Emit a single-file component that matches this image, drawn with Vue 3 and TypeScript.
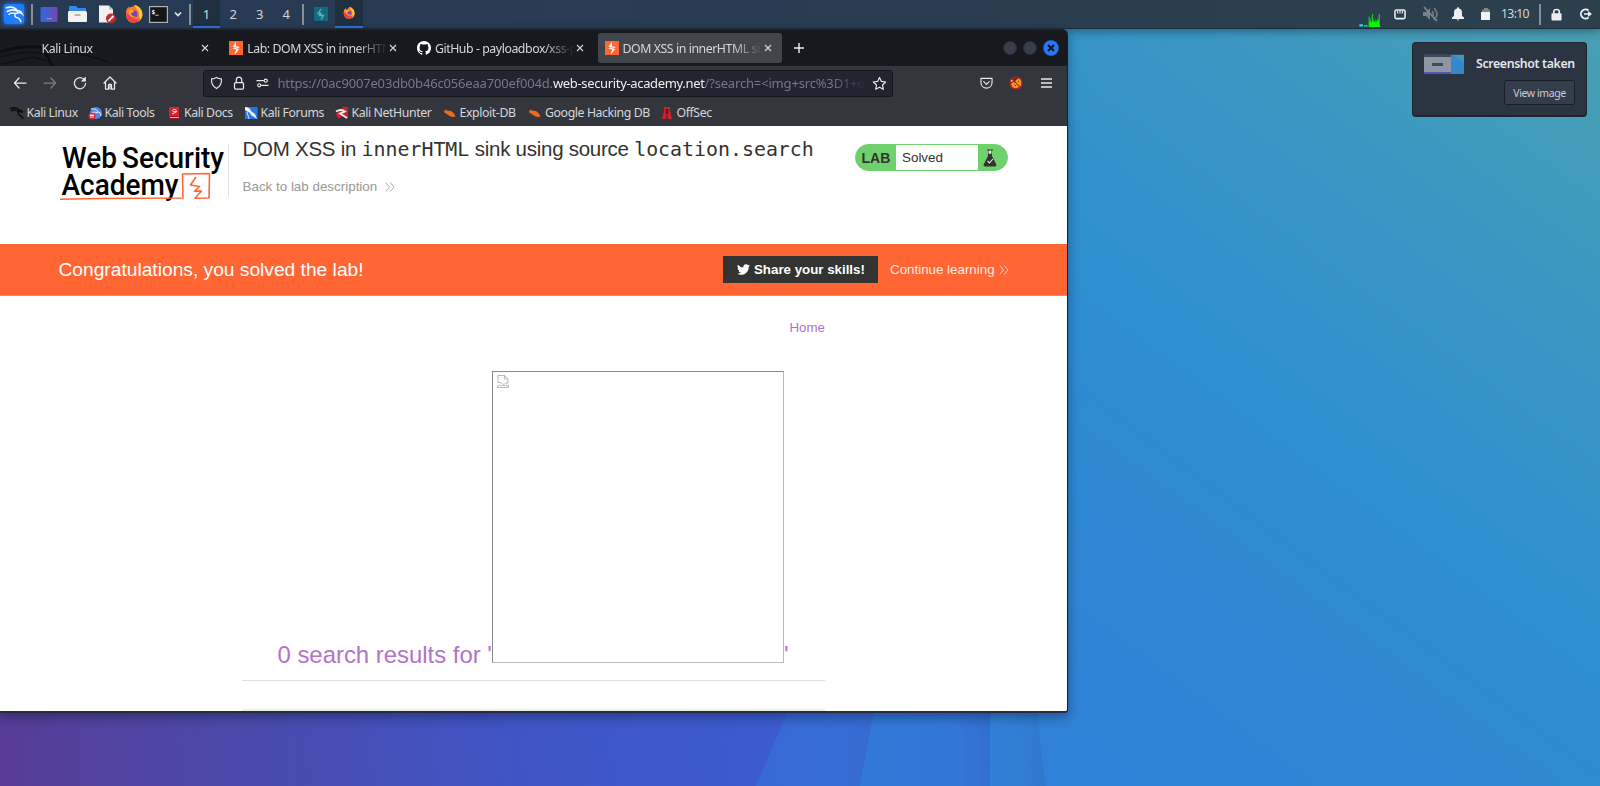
<script setup lang="ts">
interface Tab { title: string; icon: 'none' | 'burp' | 'github'; active?: boolean }
interface Bookmark { label: string; icon: string }

const tabs: Tab[] = [
  { title: 'Kali Linux', icon: 'none' },
  { title: 'Lab: DOM XSS in innerHTML', icon: 'burp' },
  { title: 'GitHub - payloadbox/xss-payload', icon: 'github' },
  { title: 'DOM XSS in innerHTML sink', icon: 'burp', active: true },
]
const bookmarks: Bookmark[] = [
  { label: 'Kali Linux', icon: 'dragon' },
  { label: 'Kali Tools', icon: 'tools' },
  { label: 'Kali Docs', icon: 'docs' },
  { label: 'Kali Forums', icon: 'forums' },
  { label: 'Kali NetHunter', icon: 'hunter' },
  { label: 'Exploit-DB', icon: 'bug' },
  { label: 'Google Hacking DB', icon: 'bug' },
  { label: 'OffSec', icon: 'offsec' },
]
const workspaces = [1, 2, 3, 4]
</script>

<template>
  <div class="desktop">
    <svg class="wallpaper" viewBox="0 0 1600 786" preserveAspectRatio="none">
      <defs>
        <linearGradient id="base" gradientUnits="userSpaceOnUse" x1="1060" y1="800" x2="1610" y2="60">
          <stop offset="0" stop-color="#2f80d8" /><stop offset=".22" stop-color="#2f87d4" /><stop offset=".48" stop-color="#2f8fd0" /><stop offset=".75" stop-color="#3a97c3" /><stop offset="1" stop-color="#489fb3" />
        </linearGradient>
        <linearGradient id="violet" gradientUnits="userSpaceOnUse" x1="0" y1="780" x2="790" y2="690">
          <stop offset="0" stop-color="#573c96" /><stop offset=".3" stop-color="#4b4aab" /><stop offset=".65" stop-color="#4055c5" /><stop offset="1" stop-color="#3b5cd0" />
        </linearGradient>
        <linearGradient id="fold" gradientUnits="userSpaceOnUse" x1="870" y1="0" x2="990" y2="0"><stop offset="0" stop-color="#3179d8" /><stop offset=".75" stop-color="#3276d6" /><stop offset="1" stop-color="#326ece" /></linearGradient>
        <linearGradient id="fold2" gradientUnits="userSpaceOnUse" x1="990" y1="0" x2="1046" y2="0"><stop offset="0" stop-color="#2f80d6" /><stop offset=".5" stop-color="#307fd4" /><stop offset="1" stop-color="#2f77cb" /></linearGradient>
        <linearGradient id="fold3" gradientUnits="userSpaceOnUse" x1="770" y1="0" x2="875" y2="0"><stop offset="0" stop-color="#386ad6" /><stop offset=".7" stop-color="#366cd5" /><stop offset="1" stop-color="#3669cf" /></linearGradient>
      </defs>
      <rect width="1600" height="786" fill="url(#base)" />
      <path d="M0 690H1037Q1038 740 1046 786H0z" fill="url(#fold2)" />
      <path d="M0 690H990V786H0z" fill="url(#fold)" />
      <path d="M0 690H878L860 786H0z" fill="url(#fold3)" />
      <path d="M0 690H797L756 786H0z" fill="url(#violet)" />
    </svg>

    <header class="panel">
      <div class="launchers">
        <svg class="kali" viewBox="0 0 24 24"><rect x="1" y="1" width="22" height="22" rx="3" fill="#1f7cff" /><path d="M3 5.500Q11 2.500 16 8.500M4 9.500Q11 5.500 16.500 9.500M16 8.500q3.500-.5 5 3.500-2.500-2-5.500-1-4.500 1.500-1.500 4.500 5 1 5.500 5.500M14 11.500Q8 10 6 13" stroke="#eef6ff" stroke-width="1.700" fill="none" /></svg>
        <i class="sep s1"></i>
        <svg class="l-desk" viewBox="0 0 18 16"><defs><linearGradient id="dk"><stop stop-color="#2b6be0" /><stop offset="1" stop-color="#7a45b0" /></linearGradient></defs><rect width="18" height="16" rx="1" fill="url(#dk)" /><path d="M7 12.500h5" stroke="#c2c9ee" stroke-dasharray="1.300 .5" /></svg>
        <svg class="l-folder" viewBox="0 0 19 18"><path d="M1 2Q1 1 2 1h6l2 2h7q1 0 1 1v5H1z" fill="#3586ef" /><path d="M2 6h15.500q1.500 0 1.500 1.500V16q0 1-1 1H1q-1 0-1-1V7q0-1 1-1z" fill="#f4f2f1" /><path d="M6.500 10h6" stroke="#aaa6a4" stroke-width="1.600" /></svg>
        <svg class="l-doc" viewBox="0 0 18 19"><path d="M1 .5h10l4 4v13H1z" fill="#f4f2f0" /><path d="m11 .5 4 4h-4z" fill="#bcbcbc" /><circle cx="13" cy="13.500" r="5" fill="#c9252f" /><path d="m10.500 16 5-5" stroke="#fff" stroke-width="1.800" /></svg>
        <svg class="l-fox" viewBox="0 0 18 18"><circle cx="9" cy="9.500" r="8" fill="#ff8a1f" /><path d="M1 8C1 4 3 3 4 1.500L5 4c3-1 4-3 4-4 4 1 8 5 8 10-1 6-6 8-10 7.500C3 17 1 13 1 8z" fill="#ff7823" /><path d="M10 0c4 1 8 5 7.500 10-.5 4-3 6.500-6 7 3-3 4-8 1-12C11 3 10 2 10 0z" fill="#ffc630" /><path d="M1 8c0 6 4 9.500 8 9.500s6-3 6-5c-2 3-8 2-9-2z" fill="#f43d4f" /><circle cx="9" cy="9" r="3.600" fill="#7542c8" /><path d="M4 5c3-1 5 1 5 2l-3 1c0 3 3 4 5 3-3 3-7 0-7-3z" fill="#ffa928" /></svg>
        <svg class="l-term" viewBox="0 0 19 17"><rect x=".6" y=".6" width="17.800" height="15.800" fill="#151617" stroke="#adb2b5" stroke-width="1.200" /><text x="2.500" y="7.500" class="prompt">$_</text></svg>
        <svg class="l-chev" viewBox="0 0 8 6"><path d="m1 1.500 3 3 3-3" fill="none" stroke="#e5e9eb" stroke-width="1.700" /></svg>
        <i class="sep s2"></i>
      </div>
      <nav class="spaces">
        <span v-for="n in workspaces" :key="n" :class="{ on: n === 1 }">{{ n }}</span>
      </nav>
      <i class="sep s3"></i>
      <svg class="task-burp" viewBox="0 0 14 14"><rect width="14" height="14" fill="#136b7e" /><path d="m7 2-3 4.500h3L5.500 8.500h4L7 12.500" fill="none" stroke="#5db4c0" stroke-width="1.300" /></svg>
      <div class="task-on">
        <svg viewBox="0 0 18 18"><path d="M1 8C1 4 3 3 4 1.500L5 4c3-1 4-3 4-4 4 1 8 5 8 10-1 6-6 8-10 7.500C3 17 1 13 1 8z" fill="#ff8424" /><path d="M10 0c4 1 8 5 7.500 10-.5 4-3 6.500-6 7 3-3 4-8 1-12z" fill="#ffc630" /><path d="M1 8c0 6 4 9.500 8 9.500s6-3 6-5c-2 3-8 2-9-2z" fill="#f4394c" /><circle cx="9.500" cy="9" r="3.500" fill="#8049bb" /><path d="M4 5c3-1 5 1 5 2l-3 1c0 3 3 4 5 3-3 3-7 0-7-3z" fill="#ffa928" /></svg>
      </div>
      <div class="tray">
        <svg class="t-cpu" viewBox="0 0 25 15"><path d="M0 12h4v2.500H0zM5 13h4v1.500H5z" fill="#12e2e0" /><path d="M10 15V4h1v7l1-6v5l.8-8v8l1-1V1h1v9l1-4v4l1-2v3l1-6v5l1-3v4l1-8v6l1-3V1h1v12h.500v2z" fill="#0cf50c" /></svg>
        <svg class="t-net" viewBox="0 0 13 12"><rect x="1" y="1" width="11" height="9.500" rx="1.500" fill="none" stroke="#eceff0" stroke-width="1.700" /><path d="M4 2v3M6.500 2v3M9 2v3" stroke="#eceff0" stroke-width="1.200" /></svg>
        <svg class="t-vol" viewBox="0 0 17 16"><path d="M1 6h3l4-4v12l-4-4H1z" fill="#73818a" /><path d="M10 5q2.500 3 0 6M12 2q6 6 0 12" fill="none" stroke="#73818a" stroke-width="1.500" /><path d="m2 1 13 14" stroke="#7e8990" stroke-width="1.700" /></svg>
        <svg class="t-bell" viewBox="0 0 12 14"><path d="M6 0q1 0 1 1.500 3 .5 3 4V9l2 1.500V12H0v-1.500L2 9V5.500q0-3.500 3-4Q5 0 6 0zM4.500 12.500h3q-1.500 2-3 0z" fill="#eceff0" /></svg>
        <svg class="t-bat" viewBox="0 0 10 12"><path d="M3 0h4v1.500h2v3H1v-3h2z" fill="#7b868d" /><path d="M0 4h9v8H0z" fill="#f0f2f2" /></svg>
        <span class="clock">13:10</span>
        <i class="sep s4"></i>
        <svg class="t-lock" viewBox="0 0 12 13"><path d="M3 6V3.500q0-2.500 3-2.500t3 2.500V6" fill="none" stroke="#eceff0" stroke-width="1.800" /><rect x=".5" y="5" width="11" height="8" rx="1" fill="#eceff0" /></svg>
        <svg class="t-out" viewBox="0 0 13 12"><path d="M9.500 2.500A4.600 4.600 0 1 0 9.500 9.500" fill="none" stroke="#eceff0" stroke-width="1.900" /><path d="M5 5.200h4V3l4 3-4 3V6.800H5z" fill="#eceff0" /></svg>
      </div>
    </header>

    <main class="window">
      <div class="tabstrip">
        <svg class="theme" viewBox="0 0 115 22"><path d="M0 8Q22 1 41 3l7 10 4 9" fill="none" stroke="#0a0b0e" stroke-width="3" /><path d="M0 13q20-6 42-4M14 17l20-4 12 4M0 20l18-3M58 9q20-2 50 9" fill="none" stroke="#0d0e12" stroke-width="1.500" /></svg>
        <div v-for="t in tabs" :key="t.title" class="tab" :class="{ active: t.active }">
          <svg v-if="t.icon === 'burp'" class="fav" viewBox="0 0 14 14"><rect width="14" height="14" fill="#ff6633" /><path d="M6.800.8 3.500 6h2.300L3.300 7.400l4 1-1.500 3.900L6 13.200l4.300-5.500H8.500l2.200-1.600-3.700-.8z" fill="#fff" /><path d="m3.500 5.800 6.700 2" stroke="#ff6633" stroke-width=".6" /></svg>
          <svg v-else-if="t.icon === 'github'" class="fav" viewBox="0 0 16 16"><path fill="#fff" d="M8 0C3.580 0 0 3.580 0 8c0 3.540 2.290 6.530 5.470 7.590.4.070.55-.17.55-.38 0-.19-.01-.82-.01-1.490-2.010.37-2.530-.49-2.690-.94-.09-.23-.48-.94-.82-1.130-.28-.15-.68-.52-.01-.53.63-.01 1.080.58 1.230.82.72 1.210 1.870.87 2.330.66.070-.52.280-.87.510-1.070-1.780-.2-3.640-.89-3.640-3.950 0-.87.310-1.590.820-2.150-.080-.2-.360-1.020.080-2.120 0 0 .67-.21 2.200.82.640-.18 1.320-.27 2-.27s1.360.09 2 .27c1.530-1.040 2.200-.82 2.200-.82.440 1.100.160 1.920.080 2.120.510.560.820 1.270.820 2.150 0 3.070-1.870 3.750-3.650 3.950.290.250.540.730.540 1.480 0 1.070-.01 1.930-.01 2.200 0 .210.150.460.550.380A8 8 0 0 0 16 8c0-4.420-3.580-8-8-8" /></svg>
          <span class="label">{{ t.title }}</span>
          <svg class="close" viewBox="0 0 8 8"><path d="m1 1 6 6m0-6L1 7" stroke="#d7d8db" stroke-width="1.100" /></svg>
        </div>
        <svg class="plus" viewBox="0 0 12 12"><path d="M6 1v10M1 6h10" stroke="#eeeef0" stroke-width="1.400" /></svg>
        <div class="controls"><i></i><i></i><svg viewBox="0 0 16 16"><circle cx="8" cy="8" r="7.700" fill="#2777f5" /><path d="m5 5 6 6m0-6-6 6" stroke="#11151f" stroke-width="2" /></svg></div>
      </div>

      <div class="toolbar">
        <svg class="n-back" viewBox="0 0 14 12"><path d="M6 1 1.500 6 6 11M2 6h11" class="ln" /></svg>
        <svg class="n-fwd" viewBox="0 0 14 12"><path d="m8 1 4.500 5L8 11m4-5H1" class="ln" /></svg>
        <svg class="n-reload" viewBox="0 0 14 14"><path d="M11.500 3.800A5.600 5.600 0 1 0 12.600 7.500" class="ln" /><path d="M12.800.5V5.500H7.800z" fill="#eeeef0" /></svg>
        <svg class="n-home" viewBox="0 0 14 14"><path d="M1 7 7 1l6 6M2.500 6v7h3V9q0-1 1.500-1t1.500 1v4h3V6M7 9v4" class="ln" /></svg>
        <div class="url">
          <svg class="u-shield" viewBox="0 0 14 14"><path d="M7 1q2 1.300 5.300 1.500Q13 9.500 7 13 1 9.500 1.700 2.500 5 2.300 7 1z" class="ln" /></svg>
          <svg class="u-lock" viewBox="0 0 12 14"><path d="M3.300 6.500V4Q3.300 1 6 1t2.700 3v2.500" class="ln" /><rect x="1.500" y="6.500" width="9" height="6.500" rx="1" class="ln" /></svg>
          <svg class="u-perm" viewBox="0 0 14 10"><path d="M1 2.500h7M6 7.500h7" class="ln" /><circle cx="10.500" cy="2.500" r="1.700" class="ln" /><circle cx="3.500" cy="7.500" r="1.700" class="ln" /></svg>
          <div class="address"><span class="host">https://0ac9007e03db0b46c056eaa700ef004d.</span><b>web-security-academy.net</b><span class="query">/?search=&lt;img+src%3D1+one</span></div>
          <svg class="u-star" viewBox="0 0 16 16"><path d="m8 1.500 2 4.300 4.600.6-3.400 3.200.9 4.600L8 12l-4.100 2.200.9-4.600L1.400 6.400 6 5.800z" class="ln" /></svg>
        </div>
        <svg class="n-pocket" viewBox="0 0 14 13"><path d="M1 1.500h12V6c0 8-12 8-12 0z" class="ln" /><path d="m4 5 3 3 3-3" class="ln" /></svg>
        <svg class="n-fox" viewBox="0 0 14 14"><circle cx="7" cy="7" r="6" fill="#5a2a22" /><path d="M2 8q1-2 4-2l1-2 3-2 2 1 .5 4-2 4-4 1.500-3-1z" fill="#f09a24" /><path d="M1.500 6 2 3l2.500 2zM11 9.500l1.500-2 .3 2.500z" fill="#f4ece6" /><path d="m5.500 9 1.500 1M9 5l1 1" stroke="#5c2408" /><circle cx="7" cy="7" r="6" fill="none" stroke="#d01c1c" stroke-width="1.200" /><path d="m3 3 8 8" stroke="#d01c1c" stroke-width="1.100" /></svg>
        <svg class="n-menu" viewBox="0 0 11 10"><path d="M0 1h11M0 5h11M0 9h11" stroke="#e9e9eb" stroke-width="1.400" /></svg>
      </div>

      <div class="bookmarks">
        <span v-for="b in bookmarks" :key="b.label" class="mark">
          <svg viewBox="0 0 14 14">
            <path v-if="b.icon === 'dragon'" d="M0 3c4-2 8-1 9 1M1 5c4-2 7 0 8 1M8 4c3 0 4 1 5 2-3-1-5 0-5 1 0 3 4 2 5 6" fill="none" stroke="#0c0d0f" stroke-width="1.600" />
            <g v-else-if="b.icon === 'tools'"><circle cx="8" cy="7" r="6" fill="#4b87ed" /><path d="M3 3q5-1 7 3 3 0 3 4M3 7q4-2 7 0" fill="none" stroke="#e5eeff" /><circle cx="4" cy="10" r="3.500" fill="#d9273c" /><path d="M2 9.500h4M3 8v4M5 8v4" stroke="#fff" stroke-width=".8" /></g>
            <g v-else-if="b.icon === 'docs'"><path d="M2 1h10v9H2z" fill="#df1f2d" /><path d="M2 10h10v3H2z" fill="#aa1722" /><path d="M3 11.500h9" stroke="#e4cdd0" stroke-width=".9" /><path d="M9.500 4q-4-1.500-4 .5t3.500 1-4 2.500" fill="none" stroke="#fff" stroke-width=".9" /></g>
            <g v-else-if="b.icon === 'forums'"><rect x="1" y="1" width="12.500" height="12" fill="#2377e8" /><path d="M1 1q5 0 6 4l4 3 2 5-6-4-1-2-5-3z" fill="#edf4ff" /><path d="m3 6 2 7" stroke="#d0e2ff" /></g>
            <g v-else-if="b.icon === 'hunter'"><path d="M1 8 8 1l5 0 0 12-4-4-6 4z" fill="#d3212c" /><path d="M1 5.500q5-3 9 0l-5 2 7 4.500" fill="none" stroke="#f5eceb" stroke-width="1.800" /></g>
            <path v-else-if="b.icon === 'bug'" d="M1 5 3 3.500l1 1 4 .5 3 2.500 1.500 3-2.500.5-3-.8L4 8.200 1.500 6.500z" fill="#ee6a18" />
            <g v-else><path d="M4 1h6v4l2 8H9l-2-2-2 2H2l2-8z" fill="#dd1c26" /><path d="M6 3h2v5H6zM5 10h4" fill="#58191c" stroke="#611a1c" stroke-width=".7" /></g>
          </svg>
          <span>{{ b.label }}</span>
        </span>
      </div>

      <section class="page">
        <div class="lab-header">
          <svg class="logo" viewBox="0 0 168 60">
            <text x="2" y="25.500" class="brand" textLength="55" lengthAdjust="spacingAndGlyphs">Web</text>
            <text x="62" y="25.500" class="brand" textLength="102" lengthAdjust="spacingAndGlyphs">Security</text>
            <text x="1.500" y="53" class="brand" textLength="117" lengthAdjust="spacingAndGlyphs">Academy</text>
            <path d="M0 57.300 40 56.500 123 56 122.500 32 149.500 31.500 149 56 135 56.300 141.500 49 134.500 49.300 139.500 44.500 130.500 43 136 35" fill="none" stroke="#ff6633" stroke-width="1.600" stroke-linejoin="round" />
          </svg>
          <i class="rule"></i>
          <div class="heading">
            <h2>DOM XSS in <code>innerHTML</code> sink using source <code>location.search</code></h2>
            <a class="back">Back to lab description <svg viewBox="0 0 10 10"><path d="m.7.500 3.800 4.500L.7 9.500M5.200.500 9 5 5.200 9.500" fill="none" stroke="currentColor" stroke-width=".8" /></svg></a>
          </div>
          <div class="status">
            <b>LAB</b><span>Solved</span>
            <i><svg viewBox="0 0 14 18"><path d="M4 1h6" stroke="#333332" stroke-width="1.100" /><path d="M5 1.500h4V7l4.300 8.500q.7 2-1.300 2H2q-2 0-1.300-2L5 7z" fill="#333332" /><path d="M5.600 1.800h2.800v3H5.600z" fill="#dff4dc" /><path d="m4.500 12 2 2L9.800 10" stroke="#dff4dc" fill="none" stroke-width="1.100" /></svg></i>
          </div>
        </div>

        <div class="banner">
          <h4>Congratulations, you solved the lab!</h4>
          <button type="button"><svg viewBox="0 0 24 20"><path fill="#fff" d="M23.950 2.570a10 10 0 0 1-2.820.77 4.960 4.960 0 0 0 2.160-2.720 9.900 9.900 0 0 1-3.120 1.180 4.920 4.920 0 0 0-8.380 4.480A13.900 13.900 0 0 1 1.640 1.160a4.920 4.920 0 0 0 1.520 6.570 4.900 4.900 0 0 1-2.230-.61v.06a4.920 4.920 0 0 0 3.950 4.830 5 5 0 0 1-2.210.08 4.940 4.940 0 0 0 4.600 3.420A9.870 9.870 0 0 1 0 17.540a13.990 13.990 0 0 0 7.550 2.210c9.060 0 14-7.500 14-13.980l-.02-.64a9.900 9.900 0 0 0 2.420-2.560z" /></svg><span>Share your skills!</span></button>
          <a>Continue learning <svg viewBox="0 0 10 10"><path d="m.7.500 3.800 4.500L.7 9.500M5.200.500 9 5 5.200 9.500" fill="none" stroke="currentColor" stroke-width=".8" /></svg></a>
        </div>

        <div class="content">
          <div class="home"><a>Home</a></div>
          <div class="result">
            <h1>0 search results for '</h1>
            <div class="broken"><svg viewBox="0 0 12 13"><path d="M4.500 8.500 3 7.500H1V.5h6.500L11 4v4H8.500L7 9.500 5.500 8.500M7.500.5V4H11M.5 12.500h11V10l-1.500 1-1.500-1-1.500 1-1.500-1L4 11l-1.500-1-2 1z" fill="none" stroke="#aaa" stroke-width=".8" /></svg></div>
            <h1 class="end">'</h1>
          </div>
          <div class="line"></div>
          <div class="search-edge"></div>
        </div>
      </section>
    </main>

    <aside class="toast">
      <svg class="thumb" viewBox="0 0 40 20"><rect width="40" height="20" fill="#3589ca" /><path d="M27 0h13v8z" fill="#419ab9" /><rect width="27" height="20" fill="#8d96a2" /><path d="M0 0h40v1H0z" fill="#33465a" /><path d="M0 1h27v2H0z" fill="#45485a" /><path d="M0 18h27v2H0z" fill="#5356aa" /><path d="M8 9h11v3H8z" fill="#444b58" /></svg>
      <strong>Screenshot taken</strong>
      <button type="button">View image</button>
    </aside>
  </div>
</template>

<style>
html, body { margin: 0; overflow: hidden; }
</style>

<style scoped>
* { box-sizing: border-box; }
svg { display: block; flex: none; }
h1, h2, h4 { margin: 0; font-weight: 400; }
.desktop { position: relative; width: 1600px; height: 786px; overflow: hidden; font-family: "Noto Sans", sans-serif; font-size: 13px; }
.wallpaper { position: absolute; inset: 0; width: 1600px; height: 786px; }
.panel { position: relative; z-index: 2; display: flex; align-items: center; height: 29px; background: linear-gradient(90deg, #273a55, #293d50 60%, #2c404c); border-bottom: 1px solid #202e3c; box-shadow: 0 2px 10px rgba(10, 25, 40, .45); color: #cfd7dd; }
.launchers { display: flex; align-items: center; height: 28px; width: 193px; }
.sep { width: 1.500px; height: 21px; background: #85909c; flex: none; }
.kali { width: 22px; height: 22px; margin-left: 3px; filter: drop-shadow(0 0 2px #2683ff); }
.s1 { margin-left: 6px; }
.l-desk { width: 18px; height: 15px; margin-left: 7.500px; }
.l-folder { width: 19px; height: 18px; margin-left: 10px; }
.l-doc { width: 18px; height: 19px; margin-left: 11px; }
.l-fox { width: 18px; height: 18px; margin-left: 9px; }
.l-term { width: 19px; height: 17px; margin-left: 6px; }
.prompt { font: bold 6px "DejaVu Sans Mono", monospace; fill: #fff; }
.l-chev { width: 8px; height: 6px; margin-left: 5.500px; }
.s2 { margin-left: 7.500px; }
.spaces { display: flex; align-self: stretch; }
.spaces span { width: 26.500px; padding-top: 5px; line-height: 18px; text-align: center; height: 28px; }
.spaces .on { background: #20303f; border-bottom: 2px solid #2c73df; width: 27px; }
.s3 { margin-left: 2.500px; }
.task-burp { width: 14px; height: 14px; margin-left: 10px; }
.task-on { margin-left: 7px; width: 28px; height: 28px; display: grid; place-items: center; background: #20303f; border-bottom: 2px solid #2c73df; }
.task-on svg { width: 12px; height: 12px; }
.tray { margin-left: auto; display: flex; align-items: center; width: 241px; }
.t-cpu { width: 24px; height: 14px; align-self: flex-end; margin-top: 12px; }
.t-net { width: 12px; height: 11px; margin-left: 10.500px; }
.t-vol { width: 17px; height: 16px; margin-left: 16px; }
.t-bell { width: 12px; height: 14px; margin-left: 13.500px; }
.t-bat { width: 10px; height: 12px; margin-left: 17px; }
.clock { margin-left: 10px; width: 28px; font-size: 12.200px; letter-spacing: -.65px; line-height: 18px; }
.s4 { margin-left: 10px; }
.t-lock { width: 11px; height: 13px; margin-left: 10.500px; }
.t-out { width: 13px; height: 12px; margin-left: 16.500px; }

.window { position: absolute; left: 0; top: 29px; z-index: 3; width: 1068px; height: 683.500px; display: flex; flex-direction: column; border-right: 1px solid #16202b; border-bottom: 2.500px solid #292d37; border-top: 1px solid #20242d; border-radius: 0 6px 3px 0; overflow: hidden; box-shadow: 0 4px 12px rgba(0, 15, 40, .4); background: #16171d; color: #d6d7da; }
.tabstrip { position: relative; height: 36px; display: flex; align-items: flex-start; padding: 3px 0 0 34.500px; background: #18191f; }
.theme { position: absolute; left: 0; bottom: 0; width: 115px; height: 22px; opacity: .8; }
.tab { position: relative; width: 184.500px; height: 30px; margin-right: 3.200px; padding: 0 10px 0 7px; display: flex; align-items: center; border-radius: 3px; flex: none; }
.tab.active { background: #42454c; }
.fav { width: 14px; height: 14px; margin-right: 4px; }
.label { flex: 1; overflow: hidden; white-space: nowrap; line-height: 20px; padding-top: 1px; font-size: 12.300px; letter-spacing: -.43px; -webkit-mask: linear-gradient(90deg, #000 calc(100% - 30px), transparent); mask: linear-gradient(90deg, #000 calc(100% - 30px), transparent); }
.close { width: 8px; height: 8px; margin-left: 2px; }
.plus { width: 12px; height: 12px; margin: 9px 0 0 8px; }
.controls { display: flex; gap: 6px; margin: 7px 8.500px 0 auto; align-items: center; }
.controls i { width: 14px; height: 14px; border-radius: 50%; background: #383e4c; border: 1px solid #2a2f3b; }
.controls svg { width: 16px; height: 16px; }
.toolbar { height: 34px; display: flex; align-items: center; background: #34363d; flex: none; }
.ln { fill: none; stroke: #e9e9eb; stroke-width: 1.250; stroke-linejoin: round; stroke-linecap: round; }
.n-back { width: 14px; height: 12px; margin-left: 13px; }
.n-fwd { width: 14px; height: 12px; margin-left: 16px; opacity: .4; }
.n-reload { width: 14px; height: 14px; margin-left: 16px; }
.n-home { width: 14px; height: 14px; margin-left: 15.500px; }
.url { width: 690px; height: 27px; margin-left: 86px; display: flex; align-items: center; background: #23242f; border: 1px solid #15161c; border-radius: 3px; }
.u-shield { width: 13px; height: 14px; margin-left: 6px; }
.u-lock { width: 12px; height: 14px; margin-left: 10px; }
.u-perm { width: 13px; height: 10px; margin-left: 11px; }
.address { width: 588px; margin-left: 9px; overflow: hidden; white-space: nowrap; line-height: 20px; font-size: 13px; letter-spacing: -.17px; color: #777881; -webkit-mask: linear-gradient(90deg, #000 94%, transparent); mask: linear-gradient(90deg, #000 94%, transparent); }
.address b { font-weight: 400; letter-spacing: -.34px; color: #eeeef1; }
.u-star { width: 15px; height: 15px; margin-left: 6px; }
.n-pocket { width: 13px; height: 12px; margin-left: 87px; }
.n-fox { width: 14px; height: 14px; margin-left: 16px; }
.n-menu { width: 11px; height: 10px; margin-left: 18px; }
.bookmarks { height: 26px; flex: none; display: grid; grid-template-columns: 78px 79.500px 76.500px 91px 108px 85.500px 131.500px 60px; padding: 0 0 1px 9.500px; background: #34363d; align-items: center; }
.mark { display: flex; align-items: center; gap: 3px; white-space: nowrap; font-size: 12.300px; letter-spacing: -.4px; line-height: 18px; }
.mark svg { width: 14px; height: 14px; }
.page { flex: 1; background: #fff; font-family: "Liberation Sans", Arial, sans-serif; color: #333332; overflow: hidden; }
.lab-header { height: 118px; display: flex; align-items: flex-start; padding-left: 60px; }
.logo { width: 168px; height: 60px; margin-top: 16px; overflow: visible; }
.brand { font: 500 29.500px Roboto, sans-serif; fill: #000; }
.rule { width: 1px; height: 53px; background: #e4e4e4; margin-top: 18px; }
.heading { width: 626px; padding-left: 13.500px; white-space: nowrap; }
h2 { font-size: 20.500px; line-height: 26px; margin-top: 10px; letter-spacing: -.26px; }
h2 code { font-family: "DejaVu Sans Mono", monospace; font-size: 19.900px; letter-spacing: 0; }
.back { display: flex; align-items: center; margin-top: 15px; font-size: 13.400px; line-height: 18px; color: #999; }
.back svg { width: 10px; height: 10px; margin-left: 8px; }
.status { width: 153px; height: 27px; margin-top: 18px; display: flex; border: 1px solid #6fd16b; border-radius: 14px; overflow: hidden; background: #6fd16b; font-size: 13.400px; line-height: 26px; }
.status b { width: 40px; padding-left: 5.500px; font-size: 14px; }
.status span { width: 82px; padding-left: 6px; background: #fff; }
.status i { padding-left: 5px; padding-top: 4px; }
.status i svg { width: 14px; height: 18px; }
.banner { height: 52px; display: flex; align-items: center; padding-left: 58.500px; background: #ff6633; color: #fff; border-bottom: 1px solid #f58b68; }
.banner h4 { font-size: 19.200px; width: 664.500px; line-height: 26px; }
.banner button { width: 155px; height: 27px; display: flex; align-items: center; gap: 4.500px; padding: 0 0 0 13.500px; border: 0; background: #333332; color: #fff; font: bold 13.300px "Liberation Sans", Arial, sans-serif; white-space: nowrap; }
.banner button svg { width: 13px; height: 11px; }
.banner a { display: flex; align-items: center; margin-left: 12px; font-size: 13.350px; white-space: nowrap; color: #ffe9e1; }
.banner a svg { width: 10px; height: 10px; margin-left: 4px; }
.content { width: 583px; margin-left: 242px; }
.home { height: 75px; padding-top: 23px; text-align: right; font-size: 13.350px; line-height: 18px; color: #b074c9; }
.result { height: 309px; display: flex; align-items: flex-start; padding-left: 35.500px; color: #b074c9; }
.result h1 { width: 214.500px; padding-top: 269px; font-size: 23.900px; line-height: 30px; white-space: nowrap; }
.result .end { width: 8px; }
.broken { width: 292px; height: 292px; flex: none; border: 1px solid; border-color: #8a8a8a #bbb #bbb #8a8a8a; padding: 3px 0 0 4px; }
.broken svg { width: 12px; height: 13px; }
.line { height: 1px; background: #dedede; }
.search-edge { height: 2px; margin-top: 28px; background: #e8f0f1; }

.toast { position: absolute; z-index: 3; left: 1412px; top: 42px; width: 175px; height: 75px; padding: 11px; display: grid; grid-template-columns: 40px 99px; column-gap: 12px; background: #2b3441; border: 1px solid #1e252e; border-bottom-width: 2px; border-radius: 4px; color: #e4e6e9; }
.thumb { width: 40px; height: 20px; }
.toast strong { font-size: 12.300px; letter-spacing: -.35px; line-height: 20px; font-weight: 600; white-space: nowrap; }
.toast button { grid-column: 1 / -1; justify-self: end; width: 71px; height: 25px; margin-top: 6px; padding: 0; font: 10.500px "Noto Sans", sans-serif; letter-spacing: -.4px; color: #c7cbd1; background: #343d4c; border: 1px solid #181e27; border-radius: 3px; white-space: nowrap; }
</style>
